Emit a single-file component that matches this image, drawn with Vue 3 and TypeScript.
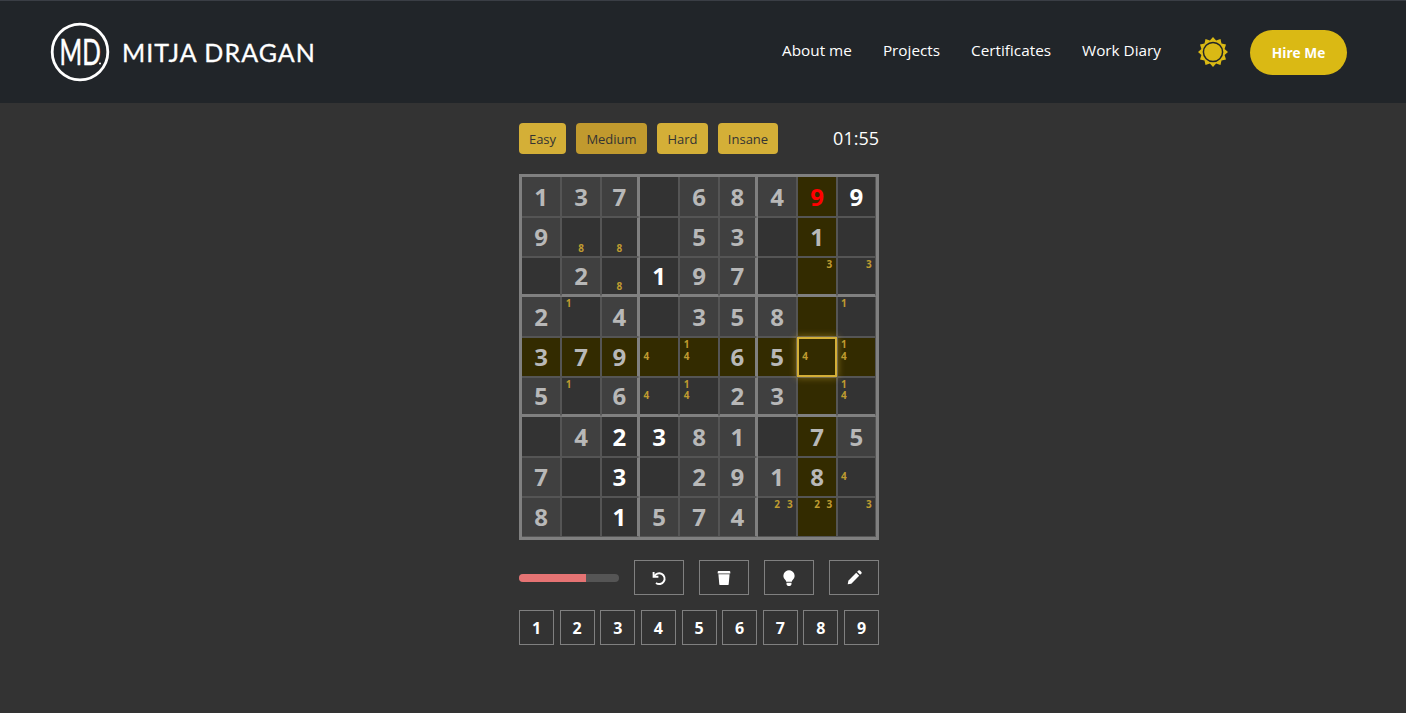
<script setup lang="ts">
const navLinks = ['About me', 'Projects', 'Certificates', 'Work Diary']
const levels = ['Easy', 'Medium', 'Hard', 'Insane']

// g = given, u = user entry, e = wrong entry, n = pencil notes
const board = [
  ['g1', 'g3', 'g7', '', 'g6', 'g8', 'g4', 'e9', 'u9'],
  ['g9', 'n8', 'n8', '', 'g5', 'g3', '', 'h1', ''],
  ['', 'g2', 'n8', 'u1', 'g9', 'g7', '', 'n3', 'n3'],
  ['g2', 'n1', 'g4', '', 'g3', 'g5', 'g8', '', 'n1'],
  ['h3', 'h7', 'h9', 'n4', 'n14', 'h6', 'h5', 'n4', 'n14'],
  ['g5', 'n1', 'g6', 'n4', 'n14', 'g2', 'g3', '', 'n14'],
  ['', 'g4', 'u2', 'u3', 'g8', 'g1', '', 'h7', 'g5'],
  ['g7', '', 'u3', '', 'g2', 'g9', 'g1', 'h8', 'n4'],
  ['g8', '', 'u1', 'g5', 'g7', 'g4', 'n23', 'n23', 'n3'],
]

const noteSlots = [1, 2, 3, 4, 5, 6, 7, 8, 9]

function cellClass(value: string, row: number, col: number) {
  const kind = value[0]
  return {
    given: kind === 'g' || kind === 'h',
    active: row === 4 || col === 7,
    selected: row === 4 && col === 7,
    'box-left': col % 3 === 0,
    'box-top': row % 3 === 0,
    'box-right': col === 2 || col === 5,
    'box-bottom': row === 2 || row === 5,
  }
}

function sunPoints() {
  const pts: string[] = []
  for (let i = 0; i < 24; i++) {
    const r = i % 2 === 0 ? 15 : 12
    const a = (i * Math.PI) / 12 - Math.PI / 2
    pts.push(`${(15 + r * Math.cos(a)).toFixed(2)},${(15 + r * Math.sin(a)).toFixed(2)}`)
  }
  return pts.join(' ')
}
</script>

<template>
  <div class="page">
    <header class="topbar">
      <div class="brand">
        <svg class="brand-mark" viewBox="0 0 60 60" width="60" height="60">
          <circle cx="30" cy="30" r="27.8" fill="none" stroke="#fff" stroke-width="2.8" />
          <text class="mark-text" transform="translate(9.5 43) scale(0.74 1.14)">MD</text>
          <circle cx="50" cy="41.5" r="1" fill="#fff" />
        </svg>
        <span class="brand-name">MITJA DRAGAN</span>
      </div>
      <nav class="nav">
        <a v-for="link in navLinks" :key="link" href="#" class="nav-link">{{ link }}</a>
      </nav>
      <svg class="sun" viewBox="0 0 30 30" width="30" height="30">
        <polygon :points="sunPoints()" fill="#dab914" />
        <circle cx="15" cy="15" r="9.6" fill="#dab914" stroke="#212529" stroke-width="1.5" />
      </svg>
      <button type="button" class="hire">Hire Me</button>
    </header>

    <main class="game">
      <div class="levels">
        <button
          v-for="level in levels"
          :key="level"
          type="button"
          class="level"
          :class="{ current: level === 'Medium' }"
        >
          {{ level }}
        </button>
        <span class="timer">01:55</span>
      </div>

      <div class="board">
        <template v-for="(cells, r) in board" :key="r">
          <div v-for="(value, c) in cells" :key="c" class="cell" :class="cellClass(value, r, c)">
            <div v-if="value[0] === 'n'" class="notes">
              <span v-for="slot in noteSlots" :key="slot">{{ value.includes(String(slot)) ? slot : '' }}</span>
            </div>
            <span v-else-if="value" class="digit" :class="{ user: value[0] === 'u', wrong: value[0] === 'e' }">
              {{ value[1] }}
            </span>
          </div>
        </template>
      </div>

      <div class="tools">
        <div class="progress"><div class="progress-fill" :style="{ width: '67%' }"></div></div>
        <button type="button" class="tool">
          <svg viewBox="0 0 16 16" width="16" height="16" fill="none" stroke="#fff" stroke-width="1.9">
            <path d="M3.2 6.6A5.4 5.4 0 1 1 5 13" />
            <path d="M2.6 2v4.8h4.8" />
          </svg>
        </button>
        <button type="button" class="tool">
          <svg viewBox="0 0 16 16" width="16" height="16" fill="#fff">
            <path d="M2.6 1h10.8q.9 0 .9.9v1.7H1.7V1.9q0-.9.9-.9z" />
            <path d="M2.4 4.2h11.2l-.9 10q-.1.9-1 .9H4.3q-.9 0-1-.9z" />
          </svg>
        </button>
        <button type="button" class="tool">
          <svg viewBox="0 0 16 16" width="18" height="18" fill="#fff">
            <path d="M8 1a5 5 0 0 0-3.6 8.4c.6.7 1 1.3 1.1 2h5c.1-.7.5-1.3 1.1-2A5 5 0 0 0 8 1z" />
            <path d="M5.8 12.3h4.4v1.2q0 .5-.4.8l-.7.7H6.9l-.7-.7q-.4-.3-.4-.8z" />
          </svg>
        </button>
        <button type="button" class="tool">
          <svg viewBox="0 0 16 16" width="17" height="17" fill="#fff">
            <path d="M9.6 3.6l2.8 2.8-7.4 7.4-3.4.6.6-3.4z" />
            <path d="M10.5 2.7l1.2-1.2q.7-.6 1.4 0l1.4 1.4q.6.7 0 1.4l-1.2 1.2z" />
          </svg>
        </button>
      </div>

      <div class="pad">
        <button v-for="n in 9" :key="n" type="button" class="pad-key">{{ n }}</button>
      </div>
    </main>
  </div>
</template>

<style scoped>
.page {
  min-height: 713px;
  background: #333;
  font-family: "Open Sans", "Liberation Sans", sans-serif;
}

.topbar {
  height: 102px;
  border-top: 1px solid #3a3e45;
  background: #212529;
  display: flex;
  align-items: center;
  padding: 0 59px 0 50px;
}

.brand {
  display: flex;
  align-items: center;
  gap: 12px;
  margin-right: auto;
}

.brand-mark {
  display: block;
  overflow: visible;
}

.mark-text {
  font-family: Lato, sans-serif;
  font-size: 33px;
  font-weight: 400;
  fill: #fff;
  stroke: #fff;
  stroke-width: 0.5px;
}

.brand-name {
  font-family: Lato, sans-serif;
  font-size: 25px;
  font-weight: 400;
  letter-spacing: 1.05px;
  color: #fff;
  -webkit-text-stroke: 0.3px #fff;
}

.nav {
  display: flex;
  gap: 31px;
  margin-top: -4px;
}

.nav-link {
  color: #fff;
  font-size: 15.3px;
  text-decoration: none;
}

.sun {
  margin: 0 22px 0 37px;
}

.hire {
  width: 97px;
  height: 45px;
  border: 0;
  border-radius: 23px;
  background: #dab914;
  color: #fff;
  font: 700 13.7px "Open Sans", sans-serif;
}

.game {
  width: 360px;
  margin-left: 519px;
  padding-top: 20px;
}

.levels {
  display: flex;
  align-items: center;
  gap: 10px;
  height: 31px;
}

.level {
  height: 31px;
  padding: 0;
  border: 0;
  border-radius: 4px;
  background: #d4af37;
  color: #333;
  font: 400 13px "Open Sans", sans-serif;
}

.level:nth-child(1) { width: 47px; }
.level:nth-child(2) { width: 71px; }
.level:nth-child(3) { width: 51px; }
.level:nth-child(4) { width: 60px; }

.level.current {
  background: #c19a2e;
}

.timer {
  margin-left: auto;
  margin-top: -1px;
  color: #fff;
  font-size: 18px;
}

.board {
  width: 360px;
  box-sizing: border-box;
  margin-top: 20px;
  border: 3px solid #808080;
  display: grid;
  grid-template-columns: repeat(9, 1fr);
  grid-auto-rows: 40px;
}

.cell {
  min-width: 0;
  box-sizing: border-box;
  border: 1px solid #555;
  background: #333;
  display: flex;
  align-items: center;
  justify-content: center;
}

.cell.box-left {
  border-left: 0;
}

.cell.box-top {
  border-top: 0;
}

.cell.box-right {
  border-right: 3px solid #808080;
}

.cell.box-bottom {
  border-bottom: 3px solid #808080;
}

.cell.given {
  background: #404040;
}

.cell.active {
  background: #332b00;
}

.cell.selected {
  position: relative;
  z-index: 1;
  border: 2px solid #d4af37;
  box-shadow: 0 0 7px 1px rgba(212, 175, 55, 0.45);
}

.digit {
  color: #b8b8b8;
  font-size: 24px;
  font-weight: 700;
  line-height: 1;
}

.digit.user {
  color: #fff;
}

.digit.wrong {
  color: #f00;
}

.notes {
  width: 100%;
  height: 100%;
  box-sizing: border-box;
  padding-bottom: 2px;
  display: grid;
  grid-template-columns: repeat(3, 1fr);
  grid-template-rows: repeat(3, 1fr);
  color: #bf9b30;
  font-size: 10px;
  font-weight: 700;
  line-height: 1;
  text-align: center;
  align-items: center;
}

.tools {
  display: flex;
  align-items: center;
  justify-content: space-between;
  margin-top: 20px;
}

.progress {
  width: 100px;
  height: 8px;
  border-radius: 4px;
  background: #555;
  overflow: hidden;
}

.progress-fill {
  height: 100%;
  background: #e57373;
}

.tool {
  width: 50px;
  height: 35px;
  padding: 0;
  border: 1px solid #808080;
  background: transparent;
  display: flex;
  align-items: center;
  justify-content: center;
}

.pad {
  display: flex;
  justify-content: space-between;
  margin-top: 15px;
}

.pad-key {
  width: 35px;
  height: 35px;
  padding: 0;
  border: 1px solid #808080;
  background: transparent;
  color: #fff;
  font: 700 16px "Open Sans", sans-serif;
}
</style>

<style>
html,
body {
  margin: 0;
  background: #333;
}
</style>
